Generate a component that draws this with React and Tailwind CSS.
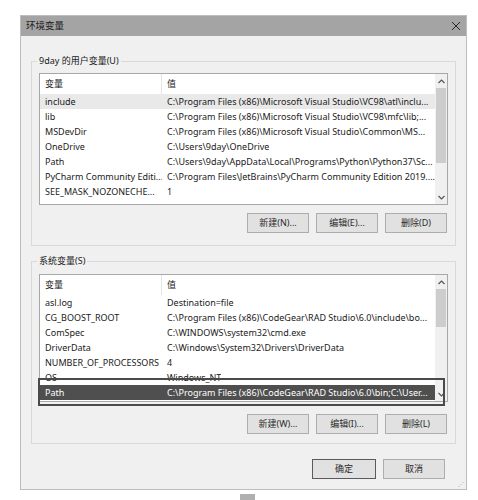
import React from "react";

const FONT = { fontFamily: '"Noto Sans", "Noto Sans CJK SC", sans-serif' };

function Up() {
  return (
    <svg width="7" height="5" viewBox="0 0 7 5">
      <path d="M0.5 4 L3.5 1 L6.5 4" fill="none" stroke="#555" strokeWidth="1.2" />
    </svg>
  );
}
function Down() {
  return (
    <svg width="7" height="5" viewBox="0 0 7 5">
      <path d="M0.5 1 L3.5 4 L6.5 1" fill="none" stroke="#555" strokeWidth="1.2" />
    </svg>
  );
}

function Row({ name, value, hover, selected }) {
  const bg = selected ? "bg-[#4f4f4f] text-white" : hover ? "bg-[#e9e9e9] text-[#1a1a1a]" : "text-[#1a1a1a]";
  return (
    <div className={`flex h-[15px] items-center whitespace-nowrap leading-[15px] ${bg}`}>
      <div className="w-[122px] shrink-0 overflow-hidden pl-[5px]">{name}</div>
      <div className="min-w-0 overflow-hidden pl-[5px]">{value}</div>
    </div>
  );
}

function ListBox({ rows, height, thumbH }) {
  return (
    <div className={`flex border border-[#a8a8a8] bg-white ${height}`}>
      <div className="flex min-w-0 flex-1 flex-col overflow-hidden">
        <div className="flex h-[20px] shrink-0 items-center text-[#1a1a1a]">
          <div className="flex h-full w-[122px] shrink-0 items-center border-r border-[#e3e3e3] pl-[5px]">变量</div>
          <div className="pl-[5px]">值</div>
        </div>
        {rows.map((r, i) => (
          <Row key={i} {...r} />
        ))}
      </div>
      <div className="flex w-[12px] shrink-0 flex-col bg-[#f0f0f0]">
        <div className="flex h-[14px] items-center justify-center">
          <Up />
        </div>
        <div className={`mx-[1px] bg-[#cdcdcd] ${thumbH}`} />
        <div className="flex-1" />
        <div className="flex h-[14px] items-center justify-center">
          <Down />
        </div>
      </div>
    </div>
  );
}

function Btn({ children, w = "w-[62px]", dark }) {
  return (
    <div
      className={`flex h-[20px] ${w} items-center justify-center border ${
        dark ? "border-[#5a5a5a]" : "border-[#adadad]"
      } bg-[#e1e1e1] text-[#2a2a2a]`}
    >
      {children}
    </div>
  );
}

export default function App() {
  const userRows = [
    { name: "include", value: "C:\\Program Files (x86)\\Microsoft Visual Studio\\VC98\\atl\\inclu...", hover: true },
    { name: "lib", value: "C:\\Program Files (x86)\\Microsoft Visual Studio\\VC98\\mfc\\lib;..." },
    { name: "MSDevDir", value: "C:\\Program Files (x86)\\Microsoft Visual Studio\\Common\\MS..." },
    { name: "OneDrive", value: "C:\\Users\\9day\\OneDrive" },
    { name: "Path", value: "C:\\Users\\9day\\AppData\\Local\\Programs\\Python\\Python37\\Sc..." },
    { name: "PyCharm Community Editi...", value: "C:\\Program Files\\JetBrains\\PyCharm Community Edition 2019...." },
    { name: "SEE_MASK_NOZONECHE...", value: "1" },
  ];
  const sysRows = [
    { name: "asl.log", value: "Destination=file" },
    { name: "CG_BOOST_ROOT", value: "C:\\Program Files (x86)\\CodeGear\\RAD Studio\\6.0\\include\\bo..." },
    { name: "ComSpec", value: "C:\\WINDOWS\\system32\\cmd.exe" },
    { name: "DriverData", value: "C:\\Windows\\System32\\Drivers\\DriverData" },
    { name: "NUMBER_OF_PROCESSORS", value: "4" },
    { name: "OS", value: "Windows_NT" },
    { name: "Path", value: "C:\\Program Files (x86)\\CodeGear\\RAD Studio\\6.0\\bin;C:\\User...", selected: true },
  ];

  return (
    <div className="h-[500px] w-[478px] overflow-hidden bg-white text-[9px] leading-[12px]" style={FONT}>
      <div className="ml-[20px] mt-[15px] w-[447px] border border-[#bdbdbd] bg-[#f0f0f0]">
        <div className="flex h-[20px] items-center justify-between bg-[#a4a4a4] pl-[5px] pr-[5px] text-[9.5px] text-[#1a1a1a]">
          <span>环境变量</span>
          <svg width="10" height="10" viewBox="0 0 10 10">
            <path d="M1 1 L9 9 M9 1 L1 9" stroke="#2a2a2a" strokeWidth="1" />
          </svg>
        </div>
        <div className="relative px-[10px] pb-[10px] pt-[19px]">
          <fieldset className="min-w-0 border border-[#d9d9d9] px-[7px] pb-[12px]">
            <legend className="-ml-[2px] px-[2px] text-[#1a1a1a]">9day 的用户变量(U)</legend>
            <div className="mt-[6px]">
              <ListBox rows={userRows} height="h-[132px]" thumbH="h-[75px]" />
            </div>
            <div className="mt-[8px] flex justify-end gap-[7px] pr-[1px]">
              <Btn>新建(N)...</Btn>
              <Btn>编辑(E)...</Btn>
              <Btn>删除(D)</Btn>
            </div>
          </fieldset>

          <fieldset className="mt-[9px] min-w-0 border border-[#d9d9d9] px-[7px] pb-[9px]">
            <legend className="-ml-[2px] px-[2px] text-[#1a1a1a]">系统变量(S)</legend>
            <div className="relative mt-[7px]">
              <ListBox rows={sysRows} height="h-[128px]" thumbH="h-[38px]" />
              <div className="pointer-events-none absolute left-[-1px] top-[104px] h-[28px] w-[407px] border-2 border-[#4a4a4a]" />
            </div>
            <div className="mt-[12px] flex justify-end gap-[7px] pr-[1px]">
              <Btn>新建(W)...</Btn>
              <Btn>编辑(I)...</Btn>
              <Btn>删除(L)</Btn>
            </div>
          </fieldset>

          <div className="mt-[15px] flex justify-end gap-[7px] pr-[11px]">
            <Btn w="w-[64px]" dark>
              确定
            </Btn>
            <Btn>取消</Btn>
          </div>
          <div className="absolute bottom-[2px] right-[2px] text-[6px] leading-[6px] text-[#9a9a9a]">⋰</div>
        </div>
      </div>
      <div className="ml-[240px] mt-[4px] h-[10px] w-[15px] bg-[#b0b0b0]" />
    </div>
  );
}
